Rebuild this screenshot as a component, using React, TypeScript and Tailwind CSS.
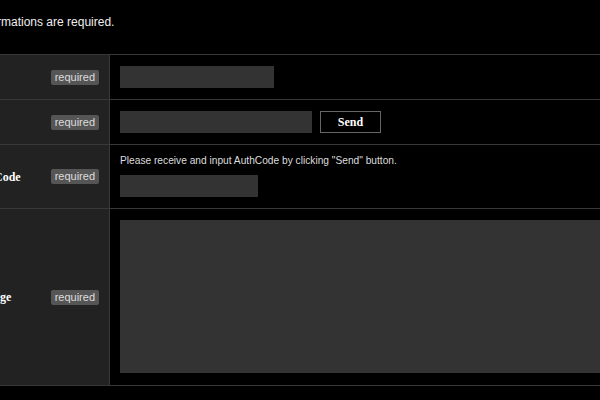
import React from 'react';

type Field = {
  label: string;
  kind: 'text' | 'email' | 'code' | 'message';
};

const fields: Field[] = [
  { label: 'Name', kind: 'text' },
  { label: 'Email', kind: 'email' },
  { label: 'AuthCode', kind: 'code' },
  { label: 'Message', kind: 'message' },
];

const sans = "font-['Liberation_Sans',Arial,sans-serif]";
const serif = "font-['Liberation_Serif','Times_New_Roman',serif]";

const Required = () => (
  <span className={`${sans} rounded-[2px] bg-[#555] px-[4px] py-[1px] text-[11px] leading-[13px] text-[#ddd]`}>required</span>
);

const FieldInput: React.FC<{ kind: Field['kind'] }> = ({ kind }) => {
  if (kind === 'text') {
    return <input type="text" className="block h-[22px] w-[154px] bg-[#333] outline-none" />;
  }
  if (kind === 'email') {
    return (
      <div className="flex items-center gap-2">
        <input type="email" className="block h-[22px] w-[192px] bg-[#333] outline-none" />
        <button type="button" className={`${serif} h-[22px] w-[61px] border border-[#666] bg-black text-[12px] leading-[20px] font-bold text-white`}>
          Send
        </button>
      </div>
    );
  }
  if (kind === 'code') {
    return (
      <div className="flex flex-col">
        <p className={`${sans} text-[10.2px] leading-[12px] text-[#ddd]`}>
          Please receive and input AuthCode by clicking "Send" button.
        </p>
        <input type="text" className="mt-[8px] block h-[22px] w-[138px] bg-[#333] outline-none" />
      </div>
    );
  }
  return <textarea className="block h-[153px] w-[520px] resize-none bg-[#333] outline-none" />;
};

export default function App() {
  return (
    <div className="h-[400px] w-[600px] overflow-hidden bg-black">
      <div className="-ml-[60px] w-[700px]">
        <p className={`${sans} pl-[37px] pt-[14px] text-[12px] leading-[16px] text-[#eee]`}>
          Informations are required.
        </p>
        <div className="mt-[24px] border-t border-[#383838]">
          {fields.map(f => (
            <div key={f.label} className="flex border-b border-[#383838]">
              <div className="flex w-[170px] shrink-0 items-center justify-between border-r border-[#383838] bg-[#222] pl-[28px] pr-[10px]">
                <span className={`${serif} text-[12px] leading-[14px] font-bold text-white`}>{f.label}</span>
                <Required />
              </div>
              <div className={`flex pl-[10px] ${f.kind === 'code' ? 'pt-[10px] pb-[11px]' : f.kind === 'message' ? 'pt-[11px] pb-[12px]' : 'py-[11px]'}`}>
                <FieldInput kind={f.kind} />
              </div>
            </div>
          ))}
        </div>
      </div>
    </div>
  );
}
